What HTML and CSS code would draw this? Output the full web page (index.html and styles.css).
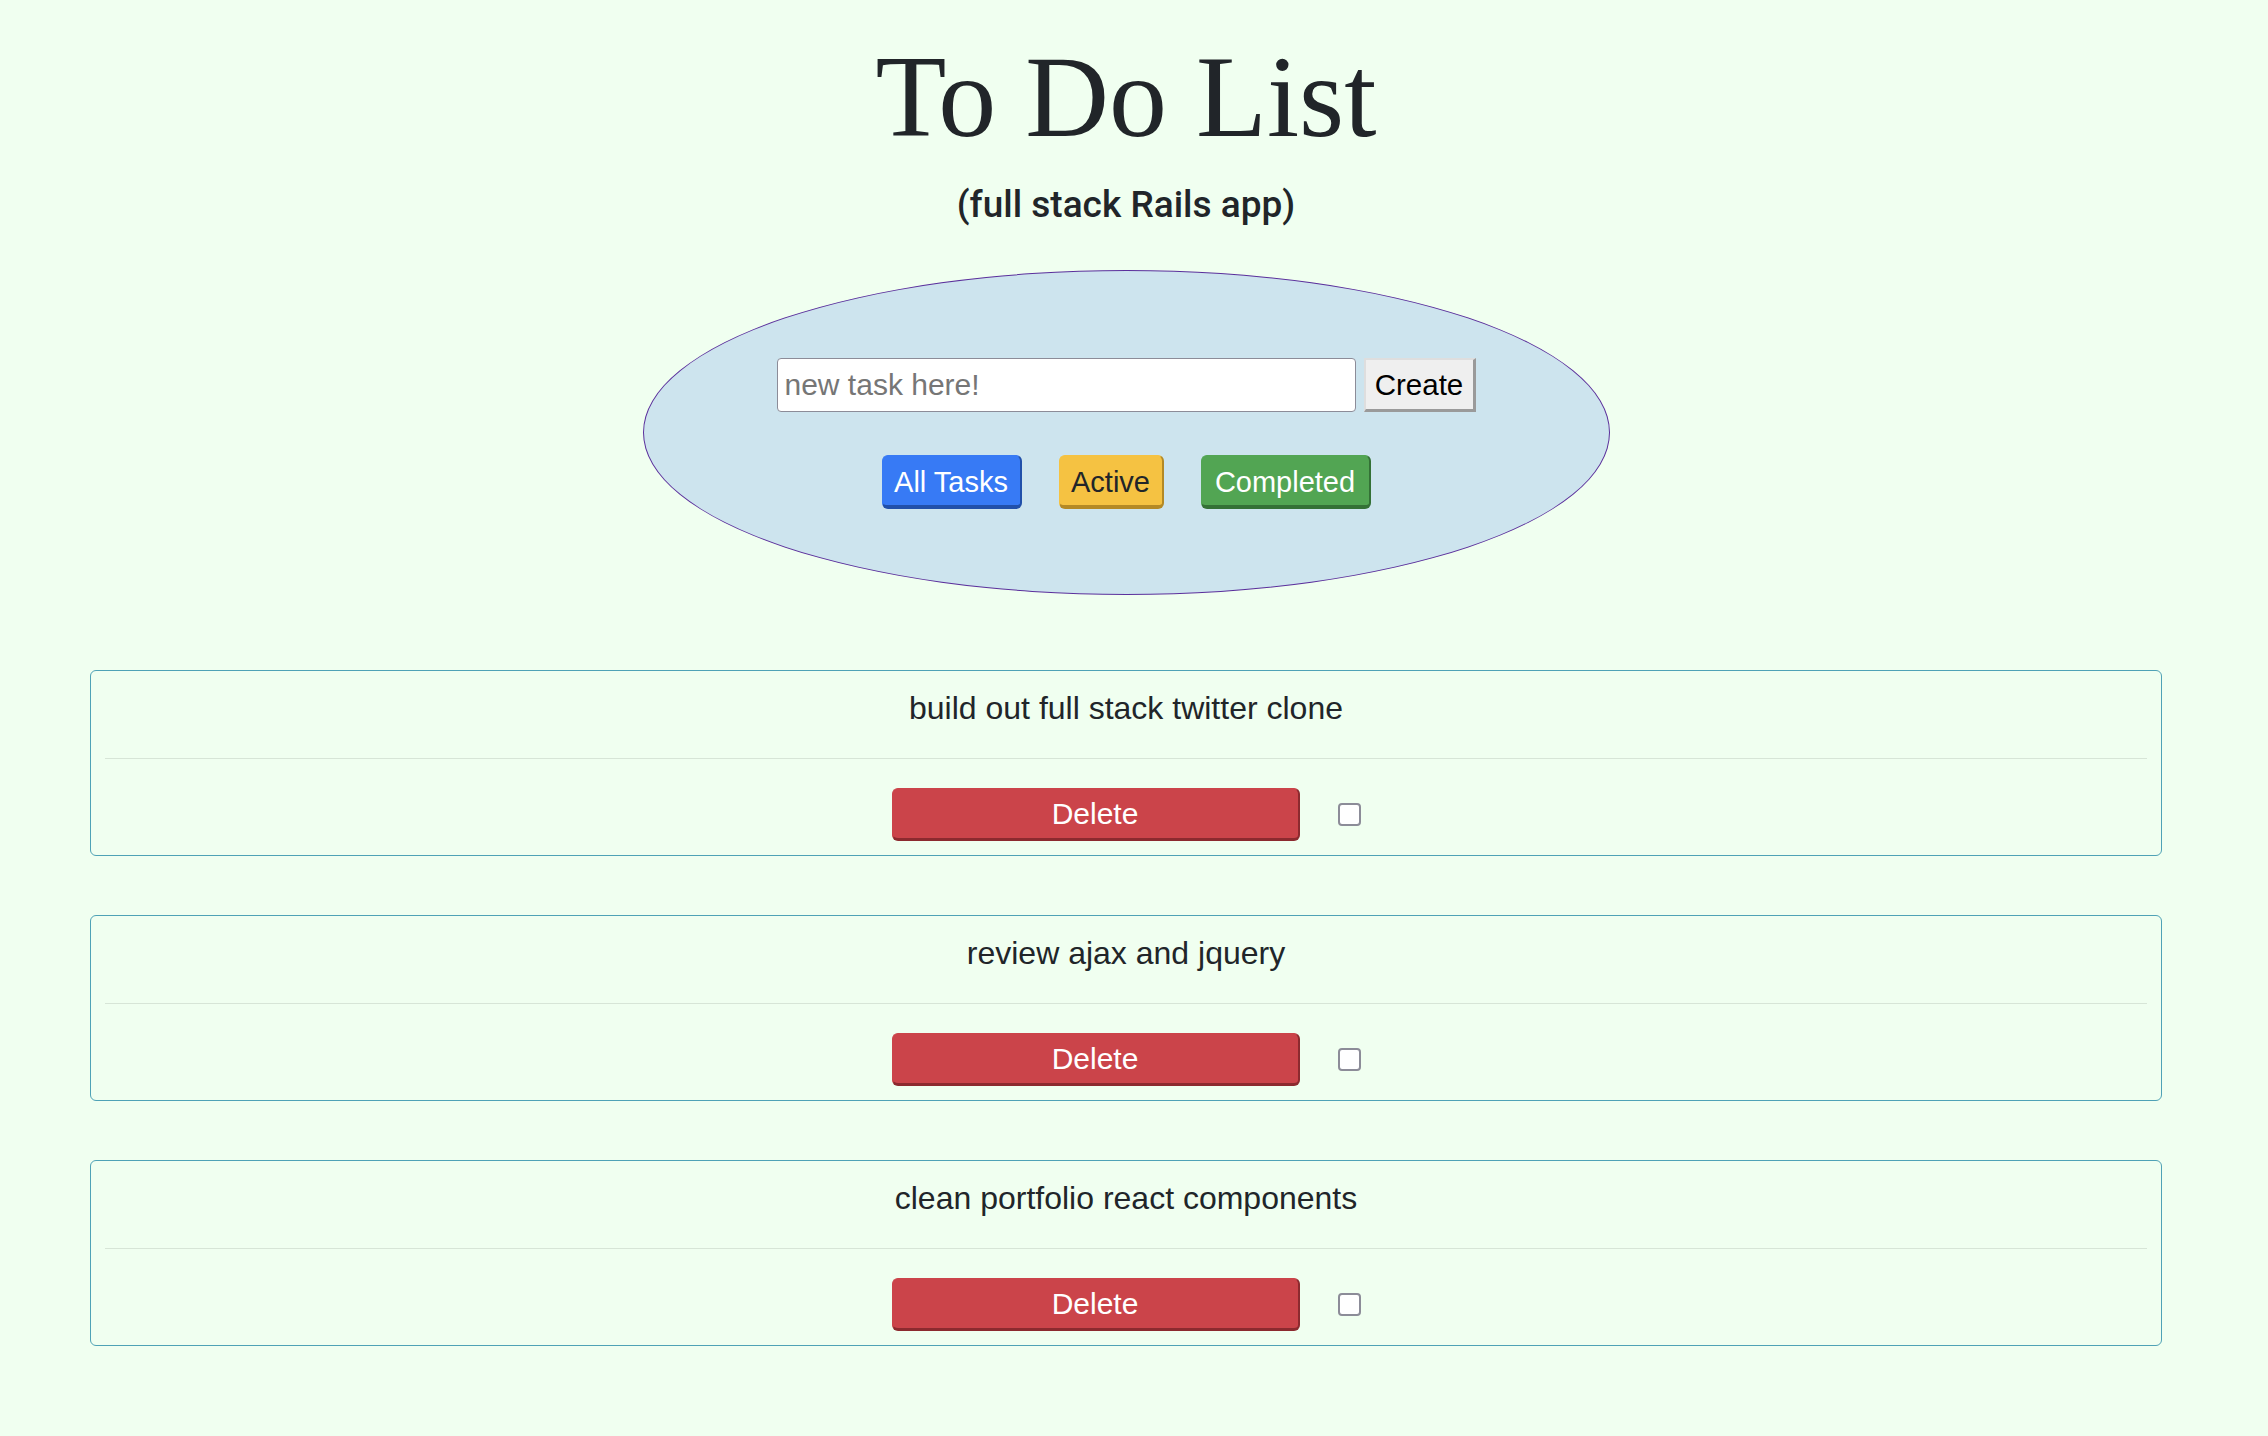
FILE: index.html
```html
<!DOCTYPE html>
<html lang="en">
<head>
<meta charset="utf-8">
<title>To Do List</title>
<link rel="stylesheet" href="styles.css">
</head>
<body>
<main class="app">
  <header class="hero">
    <h1 class="title">To Do List</h1>
    <h5 class="subtitle">(full stack Rails app)</h5>
  </header>

  <section class="oval">
    <form class="new-task">
      <input class="task-input" type="text" placeholder="new task here!">
      <button class="create-btn" type="button">Create</button>
    </form>
    <div class="filters">
      <button class="filter filter-all" type="button">All Tasks</button>
      <button class="filter filter-active" type="button">Active</button>
      <button class="filter filter-done" type="button">Completed</button>
    </div>
  </section>

  <ul class="tasks">
    <li class="task-card">
      <p class="task-name">build out full stack twitter clone</p>
      <hr class="task-rule">
      <div class="task-actions">
        <button class="delete-btn" type="button">Delete</button>
        <input class="task-check" type="checkbox">
      </div>
    </li>
    <li class="task-card">
      <p class="task-name">review ajax and jquery</p>
      <hr class="task-rule">
      <div class="task-actions">
        <button class="delete-btn" type="button">Delete</button>
        <input class="task-check" type="checkbox">
      </div>
    </li>
    <li class="task-card">
      <p class="task-name">clean portfolio react components</p>
      <hr class="task-rule">
      <div class="task-actions">
        <button class="delete-btn" type="button">Delete</button>
        <input class="task-check" type="checkbox">
      </div>
    </li>
  </ul>
</main>
</body>
</html>
```
FILE: styles.css
```css
html, body {
  margin: 0;
  padding: 0;
  background: #f0fff0;
}

body {
  font-family: "Liberation Sans", Arial, sans-serif;
  color: #212529;
}

.app {
  margin: 0 106px 0 90px;
  display: flex;
  flex-direction: column;
  align-items: center;
}

.hero {
  display: flex;
  flex-direction: column;
  align-items: center;
}

.title {
  margin: 39px 0 0;
  font-family: "Liberation Serif", "Times New Roman", serif;
  font-weight: 400;
  font-size: 116px;
  line-height: 116px;
  color: #212529;
}

.subtitle {
  margin: 28px 0 0;
  font-family: Roboto, "Liberation Sans", sans-serif;
  font-weight: 500;
  font-size: 37px;
  line-height: 44px;
  color: #212529;
}

.oval {
  box-sizing: border-box;
  width: 967px;
  height: 325px;
  margin-top: 43px;
  border: 1px solid #5b309c;
  border-radius: 50%;
  background: #cde4ee;
  display: flex;
  flex-direction: column;
  align-items: center;
  padding-top: 87px;
  gap: 43px;
}

.new-task {
  margin: 0;
  display: flex;
  gap: 8px;
}

.task-input {
  box-sizing: border-box;
  width: 579px;
  height: 54px;
  margin: 0;
  padding: 0 7px;
  border: 1px solid #8c8c98;
  border-radius: 4px;
  background: #fff;
  font-family: "Liberation Sans", Arial, sans-serif;
  font-size: 30px;
  color: #212529;
}

.task-input::placeholder {
  color: #767676;
}

.create-btn {
  box-sizing: border-box;
  width: 112px;
  height: 54px;
  margin: 0;
  padding: 0;
  background: #efefef;
  border-style: solid;
  border-width: 2px 3px 3px 2px;
  border-color: #dedede #9a9a9a #9a9a9a #dedede;
  font-family: "Liberation Sans", Arial, sans-serif;
  font-size: 29.5px;
  color: #000;
}

.filters {
  display: flex;
  gap: 37px;
}

.filter {
  box-sizing: border-box;
  height: 54px;
  margin: 0;
  padding: 3px 0 0;
  border-style: solid;
  border-width: 1px 2px 4px 1px;
  border-radius: 6px;
  font-family: "Liberation Sans", Arial, sans-serif;
  font-size: 29px;
  line-height: 1;
  white-space: nowrap;
  text-align: center;
}

.filter-all {
  width: 140px;
  background: #377af5;
  border-color: #377af5 #2150aa #2150aa #377af5;
  color: #fff;
}

.filter-active {
  width: 105px;
  background: #f5c242;
  border-color: #f5c242 #b48925 #b48925 #f5c242;
  color: #212529;
}

.filter-done {
  width: 170px;
  background: #52a553;
  border-color: #52a553 #347136 #347136 #52a553;
  color: #fff;
}

.tasks {
  list-style: none;
  margin: 75px 0 0;
  padding: 0;
  align-self: stretch;
  display: flex;
  flex-direction: column;
  gap: 59px;
}

.task-card {
  box-sizing: border-box;
  height: 186px;
  border: 1px solid #4fa2b6;
  border-radius: 6px;
  padding: 13px 14px 0;
  display: flex;
  flex-direction: column;
}

.task-name {
  margin: 0;
  font-size: 32px;
  line-height: 48px;
  text-align: center;
  color: #212529;
}

.task-rule {
  margin: 26px 0 0;
  border: 0;
  border-top: 1px solid rgba(0, 0, 0, 0.1);
  height: 0;
}

.task-actions {
  margin-top: 29px;
  display: flex;
  justify-content: center;
  align-items: center;
  gap: 38px;
}

.delete-btn {
  box-sizing: border-box;
  width: 408px;
  height: 53px;
  margin: 0;
  padding: 0;
  background: #cb444a;
  border-style: solid;
  border-width: 1px 2px 3px 1px;
  border-color: #cb444a #8c2a2f #8c2a2f #cb444a;
  border-radius: 6px;
  color: #fff;
  font-family: "Liberation Sans", Arial, sans-serif;
  font-size: 30px;
}

.task-check {
  appearance: none;
  -webkit-appearance: none;
  box-sizing: border-box;
  width: 23px;
  height: 23px;
  margin: 0;
  border: 2px solid #8c8c98;
  border-radius: 4px;
  background: #fff;
}
```
